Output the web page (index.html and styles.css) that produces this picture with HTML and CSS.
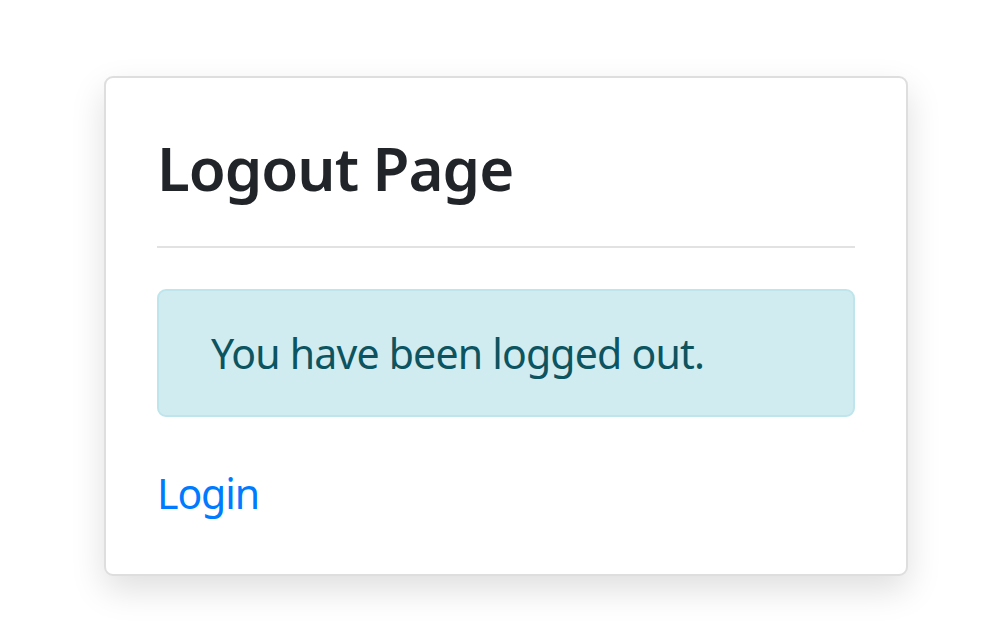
FILE: index.html
```html
<!DOCTYPE html>
<html lang="en">
<head>
<meta charset="utf-8">
<title>Logout Page</title>
<link rel="stylesheet" href="styles.css">
</head>
<body>
<main class="card">
  <h1 class="title">Logout Page</h1>
  <hr class="divider">
  <div class="alert">You have been logged out.</div>
  <a class="link" href="#">Login</a>
</main>
</body>
</html>
```
FILE: styles.css
```css
html, body {
  margin: 0;
  padding: 0;
  background: #ffffff;
}
body {
  font-family: "Noto Sans", "Open Sans", sans-serif;
  color: #212529;
  padding-top: 76px;
  min-height: 630px;
  box-sizing: border-box;
}
.card {
  box-sizing: border-box;
  width: 804px;
  margin-left: 104px;
  border: 2px solid #dedede;
  border-radius: 9px;
  background: #fff;
  padding: 54px 51px 50px;
  box-shadow: 0 14px 34px rgba(0, 0, 0, 0.13);
  display: flex;
  flex-direction: column;
  align-items: flex-start;
}
.title {
  margin: 0;
  font-size: 60px;
  font-weight: 600;
  line-height: 1.2;
  letter-spacing: -1px;
}
.divider {
  align-self: stretch;
  margin: 42px 0 41px;
  border: 0;
  border-top: 2px solid #e2e2e2;
  height: 0;
}
.alert {
  align-self: stretch;
  box-sizing: border-box;
  background: #d1ecf1;
  border: 2px solid #bee5eb;
  border-radius: 9px;
  color: #0c5460;
  font-size: 41px;
  line-height: 1.5;
  letter-spacing: -0.8px;
  padding: 32px 52px 30px;
}
.link {
  margin-top: 46px;
  color: #007bff;
  text-decoration: none;
  font-size: 41px;
  line-height: 1.5;
  letter-spacing: -1.1px;
}
```
